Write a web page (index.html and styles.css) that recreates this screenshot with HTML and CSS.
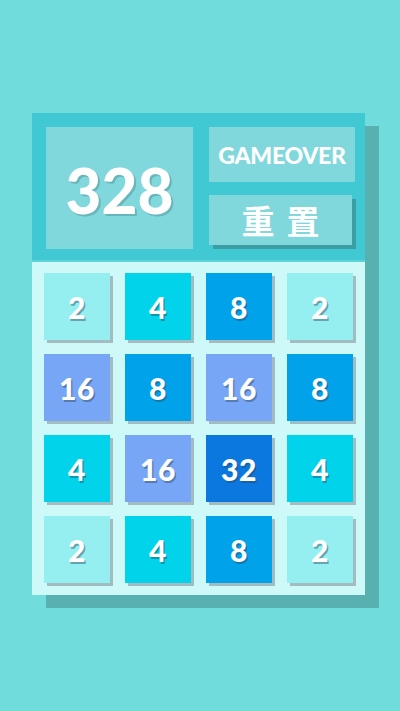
FILE: index.html
```html
<!DOCTYPE html>
<html lang="zh">
<head>
<meta charset="utf-8">
<title>2048</title>
<link rel="stylesheet" href="styles.css">
</head>
<body>
<div class="page">
  <div class="game">
    <div class="header">
      <div class="score">328</div>
      <div class="side">
        <div class="status">GAMEOVER</div>
        <div class="reset">重置</div>
      </div>
    </div>
    <div class="board">
      <div class="tile t2">2</div>
      <div class="tile t4">4</div>
      <div class="tile t8">8</div>
      <div class="tile t2">2</div>
      <div class="tile t16">16</div>
      <div class="tile t8">8</div>
      <div class="tile t16">16</div>
      <div class="tile t8">8</div>
      <div class="tile t4">4</div>
      <div class="tile t16">16</div>
      <div class="tile t32">32</div>
      <div class="tile t4">4</div>
      <div class="tile t2">2</div>
      <div class="tile t4">4</div>
      <div class="tile t8">8</div>
      <div class="tile t2">2</div>
    </div>
  </div>
</div>
</body>
</html>
```
FILE: styles.css
```css
html, body {
  margin: 0;
  padding: 0;
  background: #70dcdc;
  height: 100%;
}
body {
  font-family: "Lato", "Noto Sans", sans-serif;
}
.page {
  padding: 113px 0 0 32px;
}
.game {
  width: 333px;
  box-shadow: 14px 13px 0 #58b0b0;
}
.header {
  background: #40c9d2;
  height: 147px;
  box-sizing: border-box;
  padding: 14px 10px 11px 14px;
  display: flex;
  gap: 16px;
}
.score {
  width: 147px;
  background: #80d8dc;
  color: #fff;
  font-weight: 900;
  font-size: 62px;
  padding-top: 4px;
  box-sizing: border-box;
  display: flex;
  align-items: center;
  justify-content: center;
  text-shadow: 2px 2px 0 rgba(60, 120, 130, 0.35);
}
.side {
  flex: 1;
  display: flex;
  flex-direction: column;
  gap: 13px;
}
.status {
  height: 55px;
  background: #80d8dc;
  color: #fff;
  font-weight: 900;
  font-size: 23px;
  display: flex;
  align-items: center;
  justify-content: center;
  letter-spacing: -0.3px;
}
.reset {
  height: 50px;
  width: 143px;
  background: #80d8dc;
  color: #fff;
  font-family: "Noto Sans CJK SC", sans-serif;
  font-weight: 700;
  font-size: 33px;
  letter-spacing: 12px;
  padding-left: 12px;
  box-sizing: border-box;
  display: flex;
  align-items: center;
  justify-content: center;
  box-shadow: 4px 4px 0 #3a9ea4;
}
.board {
  background: #cdf9f9;
  border-top: 2px solid #5fd2d6;
  padding: 11px 12px 12px 12px;
  display: grid;
  grid-template-columns: repeat(4, 66px);
  grid-auto-rows: 67px;
  column-gap: 15px;
  row-gap: 14px;
}
.tile {
  display: flex;
  align-items: center;
  justify-content: center;
  color: #fff;
  font-weight: 900;
  font-size: 30px;
  letter-spacing: 0.5px;
  box-shadow: 3px 3px 0 #a3bcc2;
  text-shadow: 1.5px 1.5px 0 rgba(40, 70, 90, 0.45);
}
.t2 { background: #95eef0; }
.t4 { background: #00d3ea; }
.t8 { background: #00a2ea; }
.t16 { background: #78a6f6; }
.t32 { background: #0a78de; }
```
